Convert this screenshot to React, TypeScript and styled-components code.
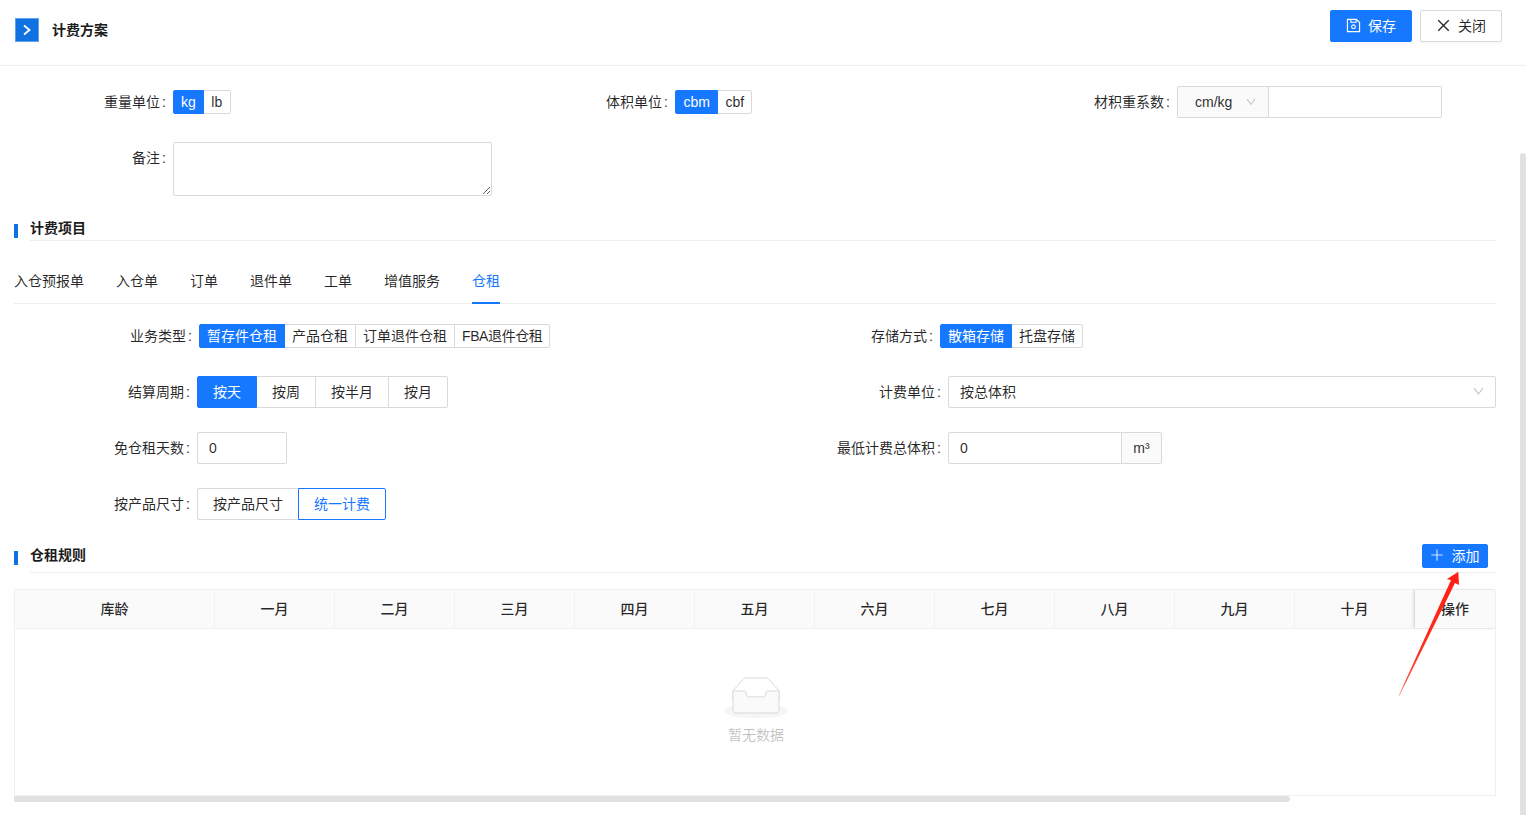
import React from "react";
import styled, { createGlobalStyle } from "styled-components";
import { AiOutlineClose, AiOutlineDown, AiOutlinePlus, AiOutlineSave } from "react-icons/ai";

const BLUE = "#1677ff";
const LINE = "#d9d9d9";
const TEXT = "rgba(0, 0, 0, 0.85)";

const GlobalStyle = createGlobalStyle`
  * {
    box-sizing: border-box;
  }
  html, body {
    margin: 0;
    padding: 0;
    background: #fff;
    overflow: hidden;
  }
  body {
    font-family: "Liberation Sans", "Noto Sans CJK SC", sans-serif;
    font-size: 14px;
    color: ${TEXT};
  }
`;

const Page = styled.div`
  position: relative;
  width: 1526px;
  height: 815px;
  overflow: hidden;
  background: #fff;
`;

const Header = styled.header`
  display: flex;
  align-items: flex-start;
  justify-content: space-between;
  height: 66px;
  padding: 10px 24px 0 15px;
  border-bottom: 1px solid #eeeeee;
`;

const HeaderLeft = styled.div`
  display: flex;
  align-items: center;
  gap: 13px;
  margin-top: 8px;
`;

const ExpandIcon = styled.div`
  display: flex;
  align-items: center;
  justify-content: center;
  width: 24px;
  height: 24px;
  background: #0f72e0;
  border: 1px solid #5fa3ee;
`;

const PageTitle = styled.h1`
  margin: 0;
  font-size: 14px;
  font-weight: 600;
  line-height: 22px;
  color: #1c1c1c;
`;

const HeaderActions = styled.div`
  display: flex;
  gap: 8px;
`;

const ActionButton = styled.button<{ $primary?: boolean }>`
  display: inline-flex;
  align-items: center;
  justify-content: center;
  gap: 6px;
  width: 82px;
  height: 32px;
  padding: 0 1px 2px 0;
  font: inherit;
  color: ${(p) => (p.$primary ? "#fff" : TEXT)};
  background: ${(p) => (p.$primary ? BLUE : "#fff")};
  border: 1px solid ${(p) => (p.$primary ? BLUE : LINE)};
  border-radius: 2px;
  box-shadow: 0 2px 0 rgba(0, 0, 0, 0.02);
`;

const Content = styled.main`
  padding: 20px 30px 0 14px;
`;

const TopRow = styled.div`
  display: grid;
  grid-template-columns: 502px 502px 1fr;
  margin-left: -14px;
`;

const Field = styled.div<{ $start?: boolean }>`
  display: flex;
  align-items: ${(p) => (p.$start ? "flex-start" : "center")};
  min-height: 32px;
`;

const FieldLabel = styled.label<{ $width: number }>`
  flex: none;
  width: ${(p) => p.$width}px;
  padding-right: 7px;
  line-height: 32px;
  text-align: right;
  white-space: nowrap;
`;

const Colon = styled.span`
  margin-left: 2px;
`;

const NoteRow = styled.div`
  margin: 24px 0 0 -14px;
`;

const NoteArea = styled.textarea`
  display: block;
  width: 319px;
  height: 54px;
  padding: 4px 11px;
  font: inherit;
  border: 1px solid ${LINE};
  border-radius: 2px;
  outline: none;
`;

const SectionHead = styled.div<{ $top: number }>`
  display: flex;
  margin-top: ${(p) => p.$top}px;
`;

const SectionMark = styled.span`
  flex: none;
  width: 4px;
  height: 14px;
  margin-top: 8px;
  background: #0f72e0;
`;

const SectionBody = styled.div<{ $gap: number }>`
  flex: 1;
  display: flex;
  align-items: flex-start;
  justify-content: space-between;
  margin-left: 12px;
  padding: 0 8px ${(p) => p.$gap}px 0;
  border-bottom: 1px solid #eeeeee;
`;

const SectionTitle = styled.h2`
  margin: 0;
  font-size: 14px;
  font-weight: 600;
  line-height: 24px;
  color: #1c1c1c;
`;

const AddButton = styled.button`
  display: inline-flex;
  align-items: center;
  justify-content: center;
  gap: 7px;
  width: 66px;
  height: 24px;
  margin-top: 1px;
  padding: 0 2px 2px 0;
  font: inherit;
  color: #fff;
  background: ${BLUE};
  border: 1px solid ${BLUE};
  border-radius: 2px;

  svg {
    opacity: 0.8;
  }
`;

const Tabs = styled.nav`
  display: flex;
  gap: 32px;
  margin-top: 18px;
  border-bottom: 1px solid #eeeeee;
`;

const Tab = styled.div<{ $active?: boolean }>`
  position: relative;
  padding: 11px 0;
  line-height: 22px;
  color: ${(p) => (p.$active ? BLUE : TEXT)};

  &::after {
    content: "";
    display: ${(p) => (p.$active ? "block" : "none")};
    position: absolute;
    left: 0;
    right: 0;
    bottom: -1px;
    height: 2px;
    background: ${BLUE};
  }
`;

const RuleGrid = styled.div`
  display: grid;
  grid-template-columns: 751px 731px;
  row-gap: 24px;
  margin-top: 16px;
`;

const SegmentGroup = styled.div`
  display: inline-flex;
`;

const Segment = styled.button<{
  $tone?: "solid" | "outline";
  $large?: boolean;
  $pad?: number;
  $tight?: boolean;
}>`
  height: ${(p) => (p.$large ? 32 : 24)}px;
  margin-left: -1px;
  padding: 0 ${(p) => p.$pad ?? (p.$large ? 15 : 7)}px;
  font: inherit;
  line-height: 1;
  letter-spacing: ${(p) => (p.$tight ? "-0.4px" : "normal")};
  white-space: nowrap;
  color: ${(p) => (p.$tone === "solid" ? "#fff" : p.$tone === "outline" ? BLUE : TEXT)};
  background: ${(p) => (p.$tone === "solid" ? BLUE : "#fff")};
  border: 1px solid ${(p) => (p.$tone ? BLUE : LINE)};
  position: relative;
  z-index: ${(p) => (p.$tone ? 1 : 0)};

  &:first-child {
    margin-left: 0;
    border-radius: 2px 0 0 2px;
  }
  &:last-child {
    border-radius: 0 2px 2px 0;
  }
`;

const InputGroup = styled.div`
  display: flex;
  height: 32px;
`;

const Addon = styled.div`
  flex: none;
  display: flex;
  align-items: center;
  justify-content: center;
  width: 40px;
  background: #fafafa;
  border: 1px solid ${LINE};
  border-left: 0;
  border-radius: 0 2px 2px 0;
`;

const UnitSelect = styled.div`
  flex: none;
  display: flex;
  align-items: center;
  justify-content: space-between;
  width: 92px;
  padding: 0 11px 0 17px;
  background: #fafafa;
  border: 1px solid ${LINE};
  border-radius: 2px 0 0 2px;
`;

const TextInput = styled.input<{ $width: number; $joined?: "left" | "right" }>`
  width: ${(p) => p.$width}px;
  height: 32px;
  padding: 0 11px;
  font: inherit;
  color: ${TEXT};
  background: #fff;
  border: 1px solid ${LINE};
  border-left-width: ${(p) => (p.$joined === "left" ? 0 : 1)}px;
  border-radius: ${(p) =>
    p.$joined === "left" ? "0 2px 2px 0" : p.$joined === "right" ? "2px 0 0 2px" : "2px"};
  outline: none;
`;

const SelectBox = styled.div`
  display: flex;
  align-items: center;
  justify-content: space-between;
  width: 548px;
  height: 32px;
  padding: 0 10px 2px 11px;
  background: #fff;
  border: 1px solid ${LINE};
  border-radius: 2px;
`;

const Table = styled.div`
  margin-top: 16px;
  border: 1px solid #f0f0f0;
`;

const TableHead = styled.div`
  display: grid;
  grid-template-columns: 200px repeat(10, 120px) 1fr;
  height: 39px;
  background: #fafafa;
  border-bottom: 1px solid #f0f0f0;
`;

const HeadCell = styled.div<{ $fixed?: boolean }>`
  display: flex;
  align-items: center;
  justify-content: center;
  padding-bottom: 2px;
  font-weight: 500;
  border-right: ${(p) => (p.$fixed ? "0" : "1px solid #f0f0f0")};
  box-shadow: ${(p) => (p.$fixed ? "-2px 0 3px rgba(0, 0, 0, 0.1)" : "none")};
`;

const EmptyBody = styled.div`
  display: flex;
  flex-direction: column;
  align-items: center;
  height: 166px;
  padding: 48px 0 0 2px;
`;

const EmptyText = styled.div`
  margin-top: 6px;
  line-height: 22px;
  color: rgba(0, 0, 0, 0.25);
`;

const HScrollThumb = styled.div`
  width: 1276px;
  height: 6px;
  background: #dfe1e3;
  border-radius: 0 3px 3px 0;
`;

const VScrollThumb = styled.div`
  position: absolute;
  top: 153px;
  right: 0;
  bottom: 0;
  width: 6px;
  background: #dfe1e3;
  border-radius: 3px 3px 0 0;
`;

const ArrowMark = styled.svg`
  position: absolute;
  left: 1390px;
  top: 565px;
  pointer-events: none;
`;

const TABS = ["入仓预报单", "入仓单", "订单", "退件单", "工单", "增值服务", "仓租"];
const COLUMNS = ["库龄", "一月", "二月", "三月", "四月", "五月", "六月", "七月", "八月", "九月", "十月"];

function FormLabel({ width, text }: { width: number; text: string }) {
  return (
    <FieldLabel $width={width}>
      {text}
      <Colon>:</Colon>
    </FieldLabel>
  );
}

function EmptyIcon() {
  return (
    <svg width="64" height="41" viewBox="0 0 64 41">
      <g transform="translate(0 1)" fill="none" fillRule="evenodd">
        <ellipse fill="#f5f5f5" cx="32" cy="33" rx="32" ry="7" />
        <g fillRule="nonzero" stroke="#d9d9d9">
          <path d="M55 12.76L44.854 1.258C44.367.474 43.656 0 42.907 0H21.093c-.749 0-1.46.474-1.947 1.257L9 12.761V22h46v-9.24z" />
          <path
            d="M41.613 15.931c0-1.605.994-2.93 2.227-2.931H55v18.137C55 33.26 53.68 35 52.05 35h-40.1C10.32 35 9 33.259 9 31.137V13h11.16c1.233 0 2.227 1.323 2.227 2.928v.022c0 1.605 1.005 2.901 2.237 2.901h14.752c1.232 0 2.237-1.308 2.237-2.913v-.007z"
            fill="#fafafa"
          />
        </g>
      </g>
    </svg>
  );
}

function App() {
  return (
    <Page>
      <GlobalStyle />
      <Header>
        <HeaderLeft>
          <ExpandIcon>
            <svg width="10" height="12" viewBox="0 0 10 12" fill="none">
              <path d="M2 1.5 L7.5 6 L2 10.5" stroke="#fff" strokeWidth="1.8" />
            </svg>
          </ExpandIcon>
          <PageTitle>计费方案</PageTitle>
        </HeaderLeft>
        <HeaderActions>
          <ActionButton $primary>
            <AiOutlineSave size={17} />
            保存
          </ActionButton>
          <ActionButton>
            <AiOutlineClose size={17} />
            关闭
          </ActionButton>
        </HeaderActions>
      </Header>

      <Content>
        <TopRow>
          <Field>
            <FormLabel width={173} text="重量单位" />
            <SegmentGroup>
              <Segment $tone="solid">kg</Segment>
              <Segment $pad={7.5}>lb</Segment>
            </SegmentGroup>
          </Field>
          <Field>
            <FormLabel width={173} text="体积单位" />
            <SegmentGroup>
              <Segment $tone="solid" $pad={7.5}>cbm</Segment>
              <Segment>cbf</Segment>
            </SegmentGroup>
          </Field>
          <Field>
            <FormLabel width={173} text="材积重系数" />
            <InputGroup>
              <UnitSelect>
                cm/kg
                <AiOutlineDown size={12} color="#bfbfbf" />
              </UnitSelect>
              <TextInput $width={173} $joined="left" />
            </InputGroup>
          </Field>
        </TopRow>
        <NoteRow>
          <Field $start>
            <FormLabel width={173} text="备注" />
            <NoteArea />
          </Field>
        </NoteRow>

        <SectionHead $top={20}>
          <SectionMark />
          <SectionBody $gap={0}>
            <SectionTitle>计费项目</SectionTitle>
          </SectionBody>
        </SectionHead>

        <Tabs>
          {TABS.map((name) => (
            <Tab key={name} $active={name === "仓租"}>
              {name}
            </Tab>
          ))}
        </Tabs>

        <RuleGrid>
          <Field>
            <FormLabel width={185} text="业务类型" />
            <SegmentGroup>
              <Segment $tone="solid">暂存件仓租</Segment>
              <Segment>产品仓租</Segment>
              <Segment>订单退件仓租</Segment>
              <Segment $tight>FBA退件仓租</Segment>
            </SegmentGroup>
          </Field>
          <Field>
            <FormLabel width={175} text="存储方式" />
            <SegmentGroup>
              <Segment $tone="solid">散箱存储</Segment>
              <Segment>托盘存储</Segment>
            </SegmentGroup>
          </Field>
          <Field>
            <FormLabel width={183} text="结算周期" />
            <SegmentGroup>
              <Segment $large $tone="solid">按天</Segment>
              <Segment $large>按周</Segment>
              <Segment $large>按半月</Segment>
              <Segment $large>按月</Segment>
            </SegmentGroup>
          </Field>
          <Field>
            <FormLabel width={183} text="计费单位" />
            <SelectBox>
              按总体积
              <AiOutlineDown size={13} color="#bfbfbf" />
            </SelectBox>
          </Field>
          <Field>
            <FormLabel width={183} text="免仓租天数" />
            <TextInput $width={90} value="0" readOnly />
          </Field>
          <Field>
            <FormLabel width={183} text="最低计费总体积" />
            <InputGroup>
              <TextInput $width={174} $joined="right" value="0" readOnly />
              <Addon>m³</Addon>
            </InputGroup>
          </Field>
          <Field>
            <FormLabel width={183} text="按产品尺寸" />
            <SegmentGroup>
              <Segment $large>按产品尺寸</Segment>
              <Segment $large $tone="outline">统一计费</Segment>
            </SegmentGroup>
          </Field>
        </RuleGrid>

        <SectionHead $top={23}>
          <SectionMark />
          <SectionBody $gap={4}>
            <SectionTitle>仓租规则</SectionTitle>
            <AddButton>
              <AiOutlinePlus size={16} />
              添加
            </AddButton>
          </SectionBody>
        </SectionHead>

        <Table>
          <TableHead>
            {COLUMNS.map((name) => (
              <HeadCell key={name}>{name}</HeadCell>
            ))}
            <HeadCell $fixed>操作</HeadCell>
          </TableHead>
          <EmptyBody>
            <EmptyIcon />
            <EmptyText>暂无数据</EmptyText>
          </EmptyBody>
        </Table>
        <HScrollThumb />
      </Content>

      <VScrollThumb />

      <ArrowMark width="80" height="135" viewBox="0 0 80 135">
        <defs>
          <linearGradient id="arrowFade" x1="0" y1="1" x2="1" y2="0">
            <stop offset="0" stopColor="#ff9a8e" />
            <stop offset="0.12" stopColor="#ff4a3a" />
            <stop offset="0.4" stopColor="#ff2a1c" />
            <stop offset="1" stopColor="#ff1f14" />
          </linearGradient>
        </defs>
        <polygon
          points="8.5,131 9.5,130.5 65,18 69,20 68.3,6.7 56.7,14.3 61,15"
          fill="url(#arrowFade)"
        />
      </ArrowMark>
    </Page>
  );
}

export default App;
